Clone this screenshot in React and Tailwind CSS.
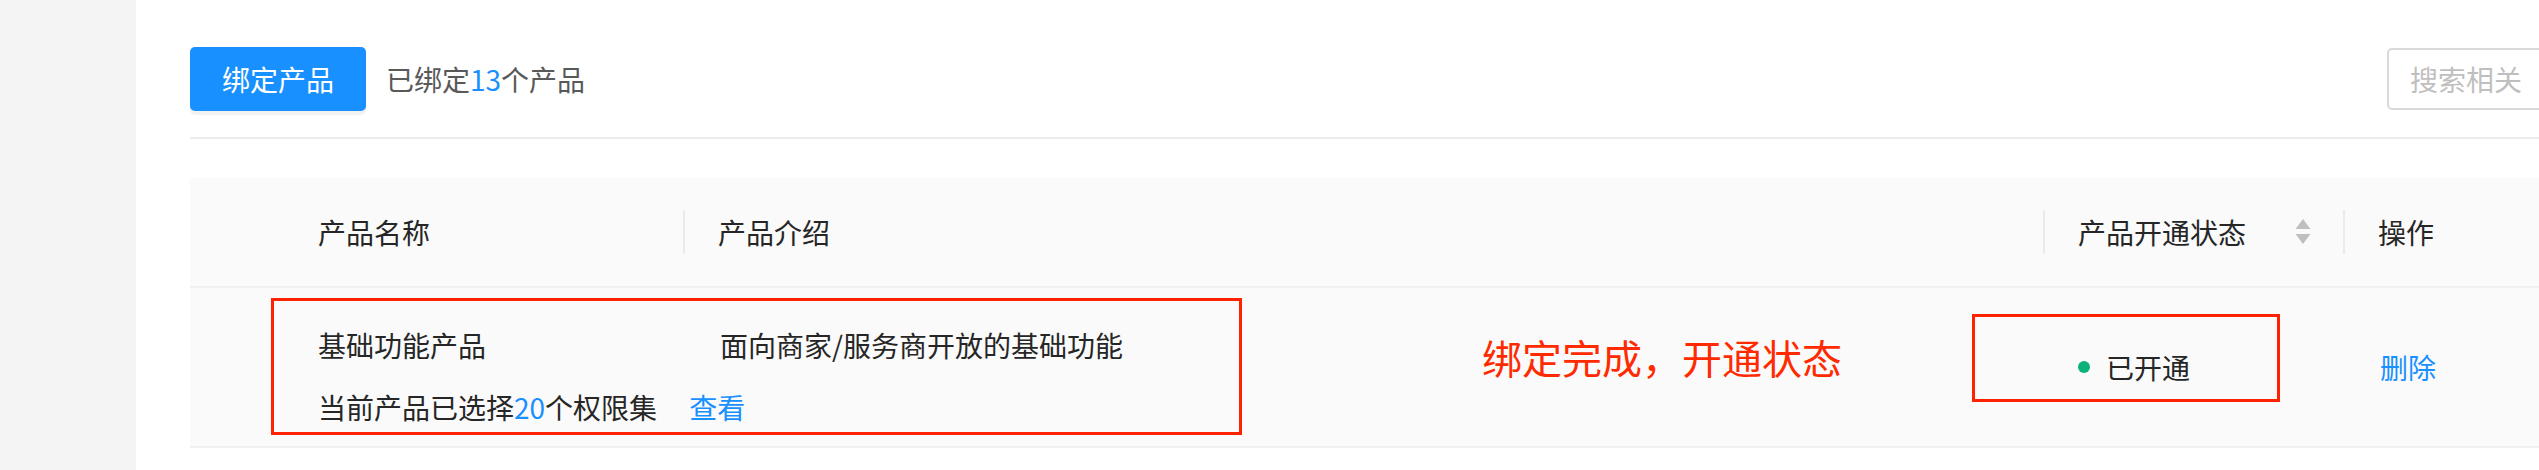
import React from 'react';

const products = [
  {
    id: 1,
    name: '基础功能产品',
    intro: '面向商家/服务商开放的基础功能',
    permissionCount: 20,
    status: '已开通',
  },
];

const SortIcon = () => (
  <svg width="16" height="26" viewBox="0 0 16 26" className="shrink-0">
    <path d="M8 0 L15.5 10 L0.5 10 Z" fill="#bfbfbf" />
    <path d="M0.5 15 L15.5 15 L8 25 Z" fill="#bfbfbf" />
  </svg>
);

const HeaderDivider = () => <span className="w-[2px] h-[44px] bg-[#ebebeb] shrink-0" />;

const App = () => {
  return (
    <div className="flex w-[2539px] h-[470px] overflow-hidden bg-white font-['Noto_Sans_CJK_SC',sans-serif]">
      <aside className="w-[136px] shrink-0 bg-[#f4f4f4]" />

      <main className="flex-1 min-w-0 pl-[54px] pt-[47px]">
        {/* toolbar */}
        <div className="flex items-center h-[64px]">
          <button className="h-[64px] w-[176px] shrink-0 rounded-[5px] bg-[#1890ff] text-white text-[28px] leading-none shadow-[0_4px_0_rgba(0,0,0,0.05)]">
            绑定产品
          </button>
          <span className="ml-[20px] text-[28px] text-[#595959] whitespace-nowrap">
            已绑定<span className="text-[#1890ff]">13</span>个产品
          </span>
          <div className="flex-1" />
          <input
            placeholder="搜索相关"
            className="w-[300px] h-[62px] shrink-0 mr-[-148px] border-2 border-[#d9d9d9] rounded-[5px] px-[21px] text-[28px] outline-none placeholder:text-[#bfbfbf]"
          />
        </div>

        <div className="mt-[26px] h-[2px] bg-[#ececec]" />

        {/* table */}
        <div className="mt-[39px]">
          <div className="grid grid-cols-[495px_1360px_300px_1fr] h-[110px] bg-[#fafafa] border-b-2 border-[#f0f0f0] text-[28px] text-[#262626]">
            <div className="flex items-center justify-between pl-[128px]">
              <span>产品名称</span>
              <HeaderDivider />
            </div>
            <div className="flex items-center justify-between pl-[33px]">
              <span>产品介绍</span>
              <HeaderDivider />
            </div>
            <div className="flex items-center pl-[33px]">
              <span>产品开通状态</span>
              <span className="ml-auto"><SortIcon /></span>
              <span className="ml-[32px] flex"><HeaderDivider /></span>
            </div>
            <div className="flex items-center pl-[33px]">
              <span>操作</span>
            </div>
          </div>

          {products.map((item) => (
            <div
              key={item.id}
              className="relative grid grid-cols-[495px_1360px_300px_1fr] h-[160px] bg-[#fafafa] border-b-2 border-[#f0f0f0] text-[28px] text-[#262626]"
            >
              <div className="pl-[128px] pt-[35px] leading-[44px]">
                <div>{item.name}</div>
                <div className="mt-[18px] whitespace-nowrap">
                  当前产品已选择<span className="text-[#1890ff]">{item.permissionCount}</span>个权限集
                  <a className="ml-[32px] text-[#1890ff] cursor-pointer">查看</a>
                </div>
              </div>
              <div className="pl-[35px] pt-[35px] leading-[44px]">{item.intro}</div>
              <div className="flex items-center pl-[33px]">
                <span className="w-[12px] h-[12px] rounded-full bg-[#0db27a]" />
                <span className="ml-[16px]">{item.status}</span>
              </div>
              <div className="flex items-center pl-[35px]">
                <a className="text-[#1890ff] cursor-pointer">删除</a>
              </div>

              {/* annotations */}
              <div className="absolute left-[81px] top-[10px] w-[971px] h-[137px] border-[3px] border-[#ff2200] pointer-events-none" />
              <div className="absolute left-[1292px] top-[45px] text-[40px] leading-[48px] text-[#ff2a00] whitespace-nowrap">
                绑定完成，开通状态
              </div>
              <div className="absolute left-[1782px] top-[26px] w-[308px] h-[88px] border-[3px] border-[#ff2200] pointer-events-none" />
            </div>
          ))}
        </div>
      </main>
    </div>
  );
};

export default App;
